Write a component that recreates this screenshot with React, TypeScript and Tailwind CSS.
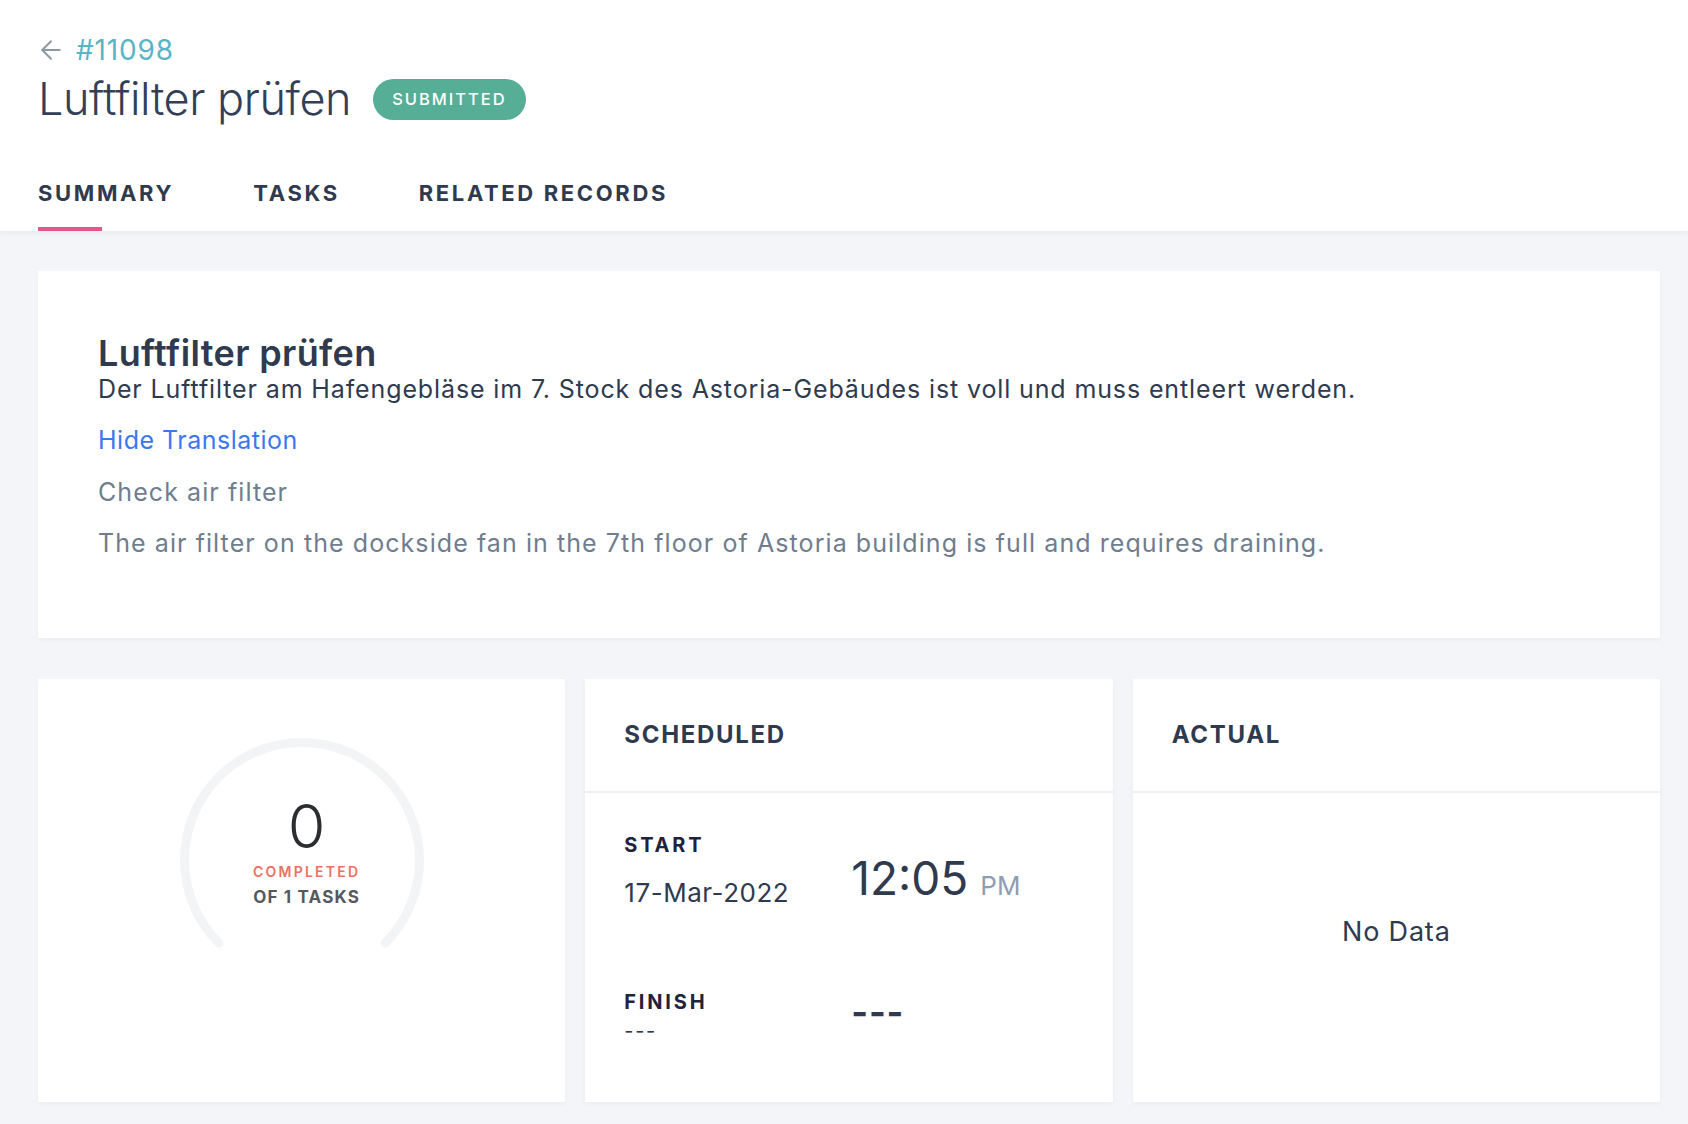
import { ArrowLeft } from "lucide-react";

const TABS = ["SUMMARY", "TASKS", "RELATED RECORDS"];

function Gauge() {
  return (
    <div className="relative mx-auto mt-[51px] h-[260px] w-[260px]">
      <svg width="260" height="260" viewBox="0 0 260 260">
        <path
          d="M 46.9 213.1 A 117.5 117.5 0 1 1 213.1 213.1"
          fill="none"
          stroke="#f3f4f6"
          strokeWidth="9"
          strokeLinecap="round"
        />
      </svg>
      <div className="absolute inset-0 flex flex-col items-center pl-[10px]">
        <span className="mt-[65px] text-[61px] leading-[62px] font-light text-[#2b2d31]">0</span>
        <span className="mt-[6px] text-[14px] leading-[18px] font-semibold tracking-[0.16em] text-[#e9725f]">
          COMPLETED
        </span>
        <span className="mt-[6px] text-[17px] leading-[20px] font-bold tracking-[0.07em] text-[#55595f]">
          OF 1 TASKS
        </span>
      </div>
    </div>
  );
}

function CardHeader({ title }: { title: string }) {
  return (
    <div className="flex h-[114px] items-center border-b-2 border-[#eef1f3] px-[39px]">
      <span className="text-[24px] font-bold tracking-[0.07em] text-[#2f3a4f]">{title}</span>
    </div>
  );
}

export default function App() {
  return (
    <div className="min-h-screen bg-[#f4f5f8] font-['Inter',sans-serif]">
      {/* Header */}
      <header className="bg-white pl-[38px] shadow-[0_2px_6px_rgba(30,40,60,0.05)]">
        <div className="box-content flex h-[32px] items-center gap-[10px] pt-[34px]">
          <ArrowLeft size={30} strokeWidth={1.5} className="-ml-[2px] text-[#8b98a6]" />
          <span className="text-[28px] font-normal tracking-[0.03em] text-[#5ab4c8]">#11098</span>
        </div>
        <div className="mt-[7px] flex h-[52px] items-center gap-[22px]">
          <h1 className="text-[45px] font-light tracking-[-0.01em] text-[#333f58]">Luftfilter prüfen</h1>
          <span className="flex h-[41px] items-center rounded-full bg-[#57ae96] px-[19px] text-[16.5px] font-medium tracking-[0.12em] text-white">
            SUBMITTED
          </span>
        </div>
        <nav className="mt-[54px] flex gap-[79px]">
          {TABS.map((tab, i) => (
            <div key={tab} className="flex flex-col">
              <span className="text-[22px] leading-[28px] font-bold tracking-[0.12em] text-[#2f3a4f]">{tab}</span>
              <span
                className={
                  i === 0
                    ? "mt-[20px] h-[4px] w-[64px] bg-[#e4578a]"
                    : "mt-[20px] h-[4px] w-[64px] bg-transparent"
                }
              />
            </div>
          ))}
        </nav>
      </header>

      {/* Content */}
      <main className="pl-[38px] pr-[28px] pt-[40px]">
        <section className="h-[367px] bg-white pl-[60px] pt-[62px] shadow-[0_2px_4px_rgba(30,40,60,0.04)]">
          <h2 className="text-[36px] leading-[40px] font-semibold tracking-[0.01em] text-[#2f3a4f]">Luftfilter prüfen</h2>
          <p className="text-[25px] leading-[32px] tracking-[0.035em] text-[#2f3a4f]">
            Der Luftfilter am Hafengebläse im 7. Stock des Astoria-Gebäudes ist voll und muss entleert werden.
          </p>
          <p className="mt-[19px] text-[25px] leading-[32px] tracking-[0.02em] text-[#3d77f0]">Hide Translation</p>
          <p className="mt-[20px] text-[25px] leading-[32px] tracking-[0.043em] text-[#6f7d8e]">Check air filter</p>
          <p className="mt-[19px] text-[25px] leading-[32px] tracking-[0.043em] text-[#6f7d8e]">
            The air filter on the dockside fan in the 7th floor of Astoria building is full and requires draining.
          </p>
        </section>

        <div className="mt-[41px] grid h-[423px] grid-cols-3 gap-[20px]">
          <div className="bg-white shadow-[0_2px_4px_rgba(30,40,60,0.04)]">
            <Gauge />
          </div>

          <div className="flex flex-col bg-white shadow-[0_2px_4px_rgba(30,40,60,0.04)]">
            <CardHeader title="SCHEDULED" />
            <div className="px-[39px] pt-[40px]">
              <div className="flex">
                <div className="flex w-[227px] flex-col">
                  <span className="text-[20px] leading-[24px] font-bold tracking-[0.14em] text-[#22223a]">START</span>
                  <span className="mt-[20px] text-[26px] leading-[32px] tracking-[0.02em] text-[#2f3a4f]">17-Mar-2022</span>
                </div>
                <div className="flex items-baseline gap-[12px] pt-[19px]">
                  <span className="text-[46px] leading-[52px] text-[#2f3a4f]">12:05</span>
                  <span className="text-[26px] text-[#8e9eb0]">PM</span>
                </div>
              </div>
              <div className="mt-[81px] flex">
                <div className="flex w-[227px] flex-col">
                  <span className="text-[20px] leading-[24px] font-bold tracking-[0.14em] text-[#22223a]">FINISH</span>
                  <span className="mt-[5px] text-[20px] leading-[24px] tracking-[0.08em] text-[#2f3a4f]">---</span>
                </div>
                <div className="pt-[2px]">
                  <span className="text-[36px] leading-[40px] font-bold tracking-[0.02em] text-[#2f3a4f]">---</span>
                </div>
              </div>
            </div>
          </div>

          <div className="flex flex-col bg-white shadow-[0_2px_4px_rgba(30,40,60,0.04)]">
            <CardHeader title="ACTUAL" />
            <div className="flex flex-1 items-center justify-center pb-[30px]">
              <span className="text-[27px] tracking-[0.03em] text-[#2f3a4f]">No Data</span>
            </div>
          </div>
        </div>
      </main>
    </div>
  );
}
